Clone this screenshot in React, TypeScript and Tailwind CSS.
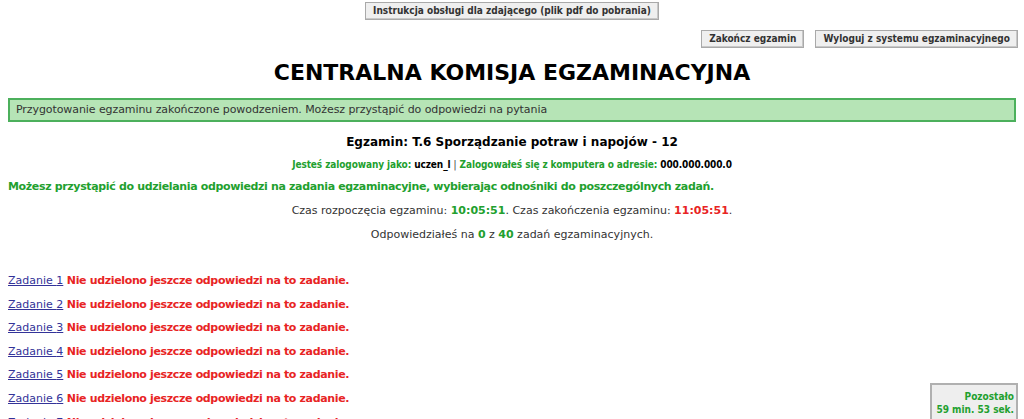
import React from "react";

const btn =
  "bg-[#efefef] border border-[#a9a9a9] text-[#333] font-bold text-[10px] leading-none px-[7px] h-[18px] flex items-center font-['DejaVu_Sans_Condensed','DejaVu_Sans',sans-serif] shadow-[inset_-1px_-1px_0_#c8c8c8]";

export default function App() {
  const tasks = [1, 2, 3, 4, 5, 6, 7];
  return (
    <div className="relative min-h-[419px] bg-white text-[#333] font-['DejaVu_Sans',Verdana,sans-serif] text-[11px] px-[8px]">
      <div className="flex justify-center pt-[2px]">
        <button className={btn}>Instrukcja obsługi dla zdającego (plik pdf do pobrania)</button>
      </div>
      <div className="flex justify-end gap-[11px] mt-[10px] mr-[-2px]">
        <button className={btn}>Zakończ egzamin</button>
        <button className={btn}>Wyloguj z systemu egzaminacyjnego</button>
      </div>
      <h1 className="text-center font-bold text-[22px] leading-[26px] text-black mt-[12px]">
        CENTRALNA KOMISJA EGZAMINACYJNA
      </h1>
      <div className="mt-[12px] bg-[#b6e4b6] border-2 border-[#4cb05c] h-[24px] flex items-center px-[6px] text-[11px] tracking-[-0.08px] text-[#333]">
        Przygotowanie egzaminu zakończone powodzeniem. Możesz przystąpić do odpowiedzi na pytania
      </div>
      <div className="text-center font-bold text-[12px] text-black mt-[11px] leading-[18px]">
        Egzamin: T.6 Sporządzanie potraw i napojów - 12
      </div>
      <div className="text-center font-bold text-[10px] tracking-[-0.1px] mt-[6px] leading-[16px] font-['DejaVu_Sans_Condensed','DejaVu_Sans',sans-serif] text-[#22a02e]">
        Jesteś zalogowany jako: <span className="text-black">uczen_l</span> <span className="font-normal text-[#333]">|</span> Zalogowałeś się z komputera o adresie: <span className="text-black">000.000.000.0</span>
      </div>
      <div className="font-bold text-[11px] tracking-[-0.35px] text-[#22a02e] mt-[6px] leading-[16px]">
        Możesz przystąpić do udzielania odpowiedzi na zadania egzaminacyjne, wybierając odnośniki do poszczególnych zadań.
      </div>
      <div className="text-center text-[11px] mt-[8px] leading-[16px]">
        Czas rozpoczęcia egzaminu: <span className="font-bold text-[#22a02e]">10:05:51</span>. Czas zakończenia egzaminu: <span className="font-bold text-[#e82424]">11:05:51</span>.
      </div>
      <div className="text-center text-[11px] mt-[8px] leading-[16px]">
        Odpowiedziałeś na <span className="font-bold text-[#22a02e]">0</span> z <span className="font-bold text-[#22a02e]">40</span> zadań egzaminacyjnych.
      </div>
      <div className="mt-[30px] flex flex-col gap-[7.6px]">
        {tasks.map((n) => (
          <div key={n} className="text-[11px] leading-[16px]">
            <a href="#" className="underline text-[#333399]">Zadanie {n}</a>{" "}
            <span className="font-bold tracking-[-0.35px] text-[#e82424]">Nie udzielono jeszcze odpowiedzi na to zadanie.</span>
          </div>
        ))}
      </div>
      <div className="fixed right-[6px] top-[383px] w-[88px] h-[50px] bg-[#eeeeee] border-2 border-[#b0b0b0] text-right pr-[2px] pt-[5px] font-bold text-[10px] leading-[13px] font-['DejaVu_Sans_Condensed','DejaVu_Sans',sans-serif] text-[#22a02e]">
        Pozostało<br />59 min. 53 sek.
      </div>
    </div>
  );
}
